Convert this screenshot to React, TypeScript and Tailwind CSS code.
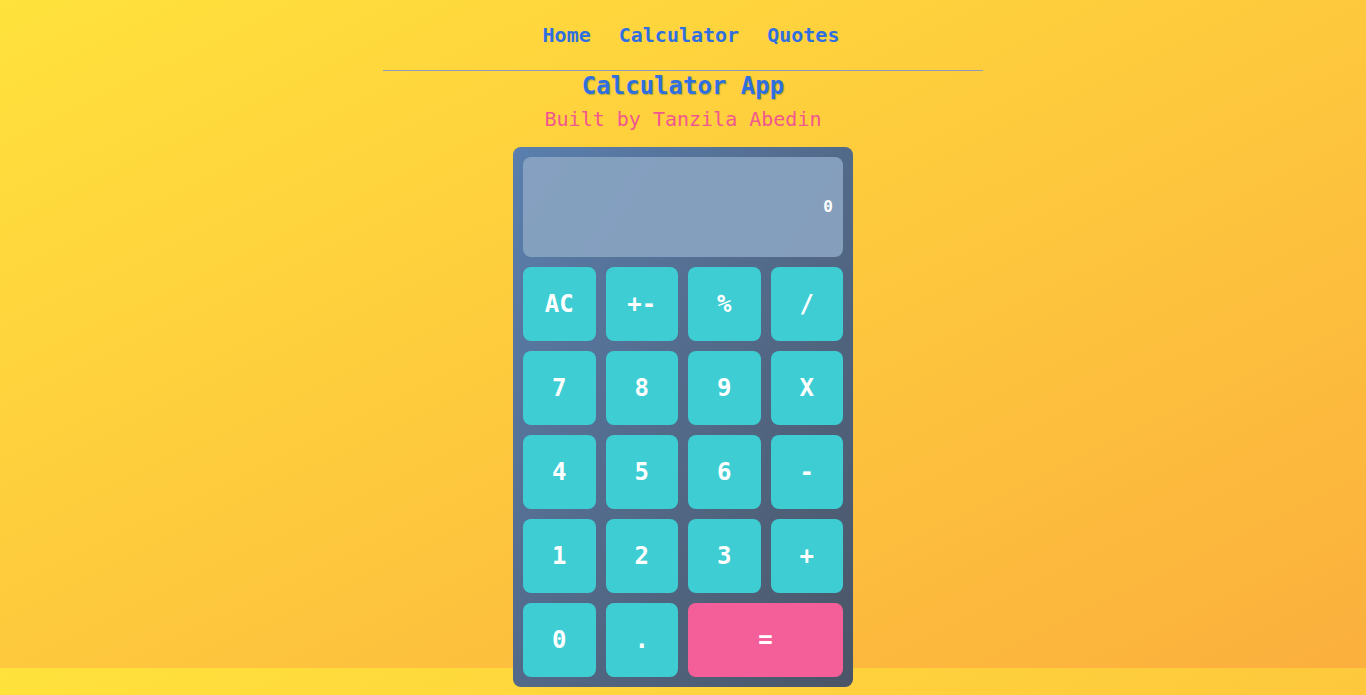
import React, { useState } from "react";

const keys = [
  "AC", "+-", "%", "/",
  "7", "8", "9", "X",
  "4", "5", "6", "-",
  "1", "2", "3", "+",
  "0", ".", "=",
];

const App = () => {
  const [display] = useState("0");

  return (
    <div className="min-h-[695px] bg-linear-to-br from-[#ffe23c] to-[#fbaf3d] bg-[length:100%_668px] bg-repeat-y font-['DejaVu_Sans_Mono',monospace]">
      <nav className="flex justify-center gap-7 pl-4 pt-[22px] pb-[22px] text-[20px] font-bold leading-[26px] text-[#2f6fe0]">
        <a href="#">Home</a>
        <a href="#">Calculator</a>
        <a href="#">Quotes</a>
      </nav>
      <div className="mx-auto w-[600px] border-t border-[#8f9bb8]"></div>
      <h1 className="mt-[1px] text-center text-[24px] font-bold leading-[28px] text-[#2f6fe0] [text-shadow:1px_1px_1px_rgba(40,90,60,0.35)]">
        Calculator App
      </h1>
      <p className="mt-[7px] text-center text-[20px] leading-[24px] text-[#f2578f]">
        Built by Tanzila Abedin
      </p>
      <div className="mx-auto mt-[16px] w-[340px] rounded-lg bg-linear-to-br from-[#5a7fae] to-[#4a5566] p-[10px]">
        <div className="flex h-[100px] items-center justify-end rounded-lg bg-[#89a4c2]/90 px-[10px] text-[16px] font-bold text-white">
          {display}
        </div>
        <div className="mt-[10px] grid grid-cols-4 gap-[10px]">
          {keys.map((k) => (
            <button
              key={k}
              className={
                k === "="
                  ? "col-span-2 flex h-[74px] items-center justify-center rounded-lg bg-[#f55f99] text-[24px] font-bold text-white"
                  : "flex h-[74px] items-center justify-center rounded-lg bg-[#3ecdd3] text-[24px] font-bold text-white"
              }
            >
              {k}
            </button>
          ))}
        </div>
      </div>
    </div>
  );
};

export default App;
